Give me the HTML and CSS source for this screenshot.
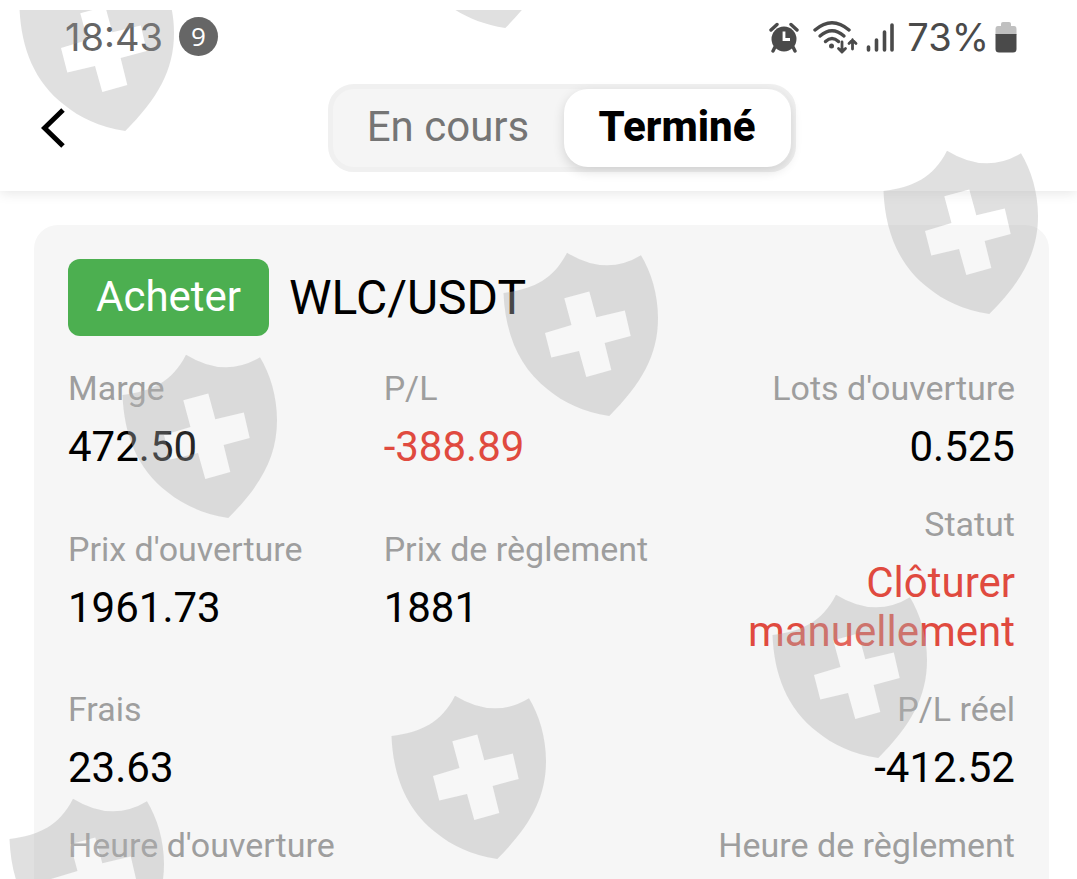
FILE: index.html
```
<!DOCTYPE html>
<html lang="fr">

<head>
    <meta charset="UTF-8">
    <meta name="viewport" content="width=device-width, initial-scale=1.0">
    <title>Ordres</title>
    <link rel="stylesheet" href="styles.css">
</head>

<body>

    <!-- Barre d'état du téléphone -->
    <div class="status-bar">
        <div class="status-left">
            <span class="clock">18:43</span>
            <span class="notif">9</span>
        </div>
        <div class="status-right">
            <svg class="icon-alarm" width="30" height="32" viewBox="0 0 30 32">
                <circle cx="15" cy="18" r="12.500" fill="#4a4a4a"/>
                <path d="M2 9 L8 3.500 M28 9 L22 3.500 M6 26 L4 30 M24 26 L26 30" stroke="#4a4a4a" stroke-width="3.400" stroke-linecap="round"/>
                <path d="M15 10.500 V18.500 H21" fill="none" stroke="#fff" stroke-width="2.800"/>
            </svg>
            <svg class="icon-wifi" width="45" height="34" viewBox="0 0 45 34">
                <g fill="none" stroke="#4a4a4a" stroke-width="3.400" stroke-linecap="round">
                    <path d="M2 10 Q19 -4.500 36 10"/>
                    <path d="M7 16 Q19 5.500 31 16"/>
                    <path d="M12.500 21.500 Q19 15.500 25.500 21.500"/>
                    <path d="M29 22 V32 M25.500 28.500 L29 32 L32.500 28.500 M39.500 29 V20 M36 23.500 L39.500 20 L43 23.500" stroke-width="2.800"/>
                </g>
                <circle cx="18.500" cy="26" r="2.500" fill="#4a4a4a"/>
            </svg>
            <svg class="icon-signal" width="29" height="30" viewBox="0 0 29 30">
                <path d="M2.500 25 V28 M10.500 18 V28 M18.500 10 V28 M26 3 V28" stroke="#4a4a4a" stroke-width="3.600" stroke-linecap="round"/>
            </svg>
            <span class="percent">73%</span>
            <svg class="icon-battery" width="22" height="32" viewBox="0 0 22 32">
                <path d="M6 3 Q6 1 8 1 H14 Q16 1 16 3 V5 H19 Q21.500 5 21.500 8 V14 H0.500 V8 Q0.500 5 3 5 H6 Z" fill="#c0c0c0"/>
                <path d="M0.500 13 H21.500 V28 Q21.500 31.500 18 31.500 H4 Q0.500 31.500 0.500 28 Z" fill="#4a4a4a"/>
            </svg>
        </div>
    </div>

    <!-- En-tête avec les onglets -->
    <header class="header">
        <button class="back-button" aria-label="Retour">
            <svg width="25" height="40" viewBox="0 0 25 40">
                <path d="M22 2 L3.500 20 L22 38" fill="none" stroke="#000" stroke-width="5"/>
            </svg>
        </button>
        <div class="tabs">
            <button class="tab">En cours</button>
            <button class="tab tab-active">Terminé</button>
        </div>
    </header>

    <!-- Détail de l'ordre -->
    <main class="card">
        <div class="card-title">
            <span class="side">Acheter</span>
            <h1>WLC/USDT</h1>
        </div>

        <div class="details">
            <div class="item">
                <div class="label">Marge</div>
                <div class="value">472.50</div>
            </div>
            <div class="item">
                <div class="label">P/L</div>
                <div class="value red">-388.89</div>
            </div>
            <div class="item right">
                <div class="label">Lots d'ouverture</div>
                <div class="value">0.525</div>
            </div>

            <div class="item">
                <div class="label">Prix d'ouverture</div>
                <div class="value">1961.73</div>
            </div>
            <div class="item">
                <div class="label">Prix de règlement</div>
                <div class="value">1881</div>
            </div>
            <div class="item right">
                <div class="label">Statut</div>
                <div class="value red">Clôturer manuellement</div>
            </div>

            <div class="item">
                <div class="label">Frais</div>
                <div class="value">23.63</div>
            </div>
            <div class="item right last">
                <div class="label">P/L réel</div>
                <div class="value">-412.52</div>
            </div>

            <div class="item">
                <div class="label">Heure d'ouverture</div>
            </div>
            <div class="item right last">
                <div class="label">Heure de règlement</div>
            </div>
        </div>
    </main>

    <!-- Filigrane : boucliers répartis sur la page -->
    <svg class="watermark" aria-hidden="true">
        <defs>
            <g id="shield">
                <path fill="#b1b1b1" fill-opacity="0.4" fill-rule="evenodd" d="M0.500 41 C30 37 50 28 64 0.700 Q103 24.600 138 3.300 C148 20 155 42 155 66 C155 104 138 132 106.300 164 C80 160 60 150 45.700 138.300 C15 115 2 80 0.500 41 Z M61.300 46.300 L86.300 39.500 L93.300 65.300 L121.800 58.500 L127.700 84 L101.600 91 L108.300 118 L83.300 125 L76 99 L48.300 105.500 L42 81 L68.500 73 Z"/>
                <path fill="#fff" fill-opacity="0.15" d="M61.300 46.300 L86.300 39.500 L93.300 65.300 L121.800 58.500 L127.700 84 L101.600 91 L108.300 118 L83.300 125 L76 99 L48.300 105.500 L42 81 L68.500 73 Z"/>
            </g>
        </defs>
        <use href="#shield" x="19" y="-43"/>
        <use href="#shield" x="399" y="-146"/>
        <use href="#shield" x="883" y="140"/>
        <use href="#shield" x="503" y="242"/>
        <use href="#shield" x="122" y="344"/>
        <use href="#shield" x="772" y="584"/>
        <use href="#shield" x="391" y="685"/>
        <use href="#shield" x="9" y="788"/>
    </svg>

</body>

</html>
```
FILE: styles.css
```
/* Styles généraux */
* {
    box-sizing: border-box;
}

body {
    margin: 0;
    min-height: 100vh;
    display: flex;
    flex-direction: column;
    position: relative;
    background-color: #fff;
    color: #000;
    font-family: Roboto, "Liberation Sans", sans-serif;
}

button {
    border: none;
    background: transparent;
    padding: 0;
    font-family: inherit;
    cursor: pointer;
}

svg {
    display: block;
}

/* Barre d'état */
.status-bar {
    position: relative;
    z-index: 1;
    height: 73px;
    padding: 0 60px 0 65px;
    display: flex;
    justify-content: space-between;
    align-items: center;
    background-color: #fff;
    color: #4a4a4a;
    font-family: Inter, Roboto, sans-serif;
    font-weight: 400;
    font-size: 38px;
}

.status-left,
.status-right {
    display: flex;
    align-items: center;
}

.status-left {
    gap: 16px;
}

.notif {
    width: 39px;
    height: 39px;
    border-radius: 50%;
    background-color: #666;
    color: #fff;
    font-family: "Open Sans", sans-serif;
    font-size: 26px;
    line-height: 38px;
    text-align: center;
}

.icon-wifi {
    margin-left: 14px;
}

.icon-signal {
    margin-left: 8px;
}

.percent {
    margin: 0 6px 0 12px;
}

/* En-tête */
.header {
    height: 118px;
    padding: 11px 35px 19px 41px;
    display: flex;
    align-items: center;
    box-shadow: 0 2px 12px rgba(0, 0, 0, 0.1);
}

.back-button {
    width: 40px;
}

.tabs {
    margin: 0 auto;
    display: flex;
    border: 5px solid #f0f0f0;
    border-radius: 26px;
    background-color: #f5f5f5;
}

.tab {
    width: 231px;
    height: 78px;
    padding-bottom: 3px;
    border-radius: 24px;
    color: #757575;
    font-size: 42px;
}

.tab-active {
    width: 227px;
    background-color: #fff;
    color: #000;
    font-weight: 800;
    box-shadow: 0 4px 12px rgba(0, 0, 0, 0.14);
}

/* Carte */
.card {
    flex: 1;
    margin: 34px 28px 0 34px;
    padding: 34px 34px 0;
    border-radius: 24px 24px 0 0;
    background-color: #f6f6f6;
}

.card-title {
    display: flex;
    align-items: center;
    gap: 20px;
    margin-bottom: 33px;
}

.side {
    height: 77px;
    padding: 0 28px;
    border-radius: 12px;
    background-color: #4caf50;
    color: #fff;
    font-size: 42px;
    line-height: 75px;
}

h1 {
    margin: 0;
    font-size: 48px;
    font-weight: 400;
}

.details {
    display: grid;
    grid-template-columns: repeat(3, 1fr);
    align-items: center;
    row-gap: 34px;
}

.label {
    margin-bottom: 15px;
    color: #9e9e9e;
    font-size: 34px;
    line-height: 38px;
}

.value {
    font-size: 42px;
    line-height: 49px;
}

.right {
    text-align: right;
}

.last {
    grid-column: 3;
}

.last .label {
    white-space: nowrap;
}

.red {
    color: #e04a3f;
}

/* Filigrane */
.watermark {
    position: absolute;
    z-index: 2;
    top: 10px;
    left: 0;
    width: 100%;
    height: calc(100% - 10px);
    overflow: hidden;
    pointer-events: none;
}
```
